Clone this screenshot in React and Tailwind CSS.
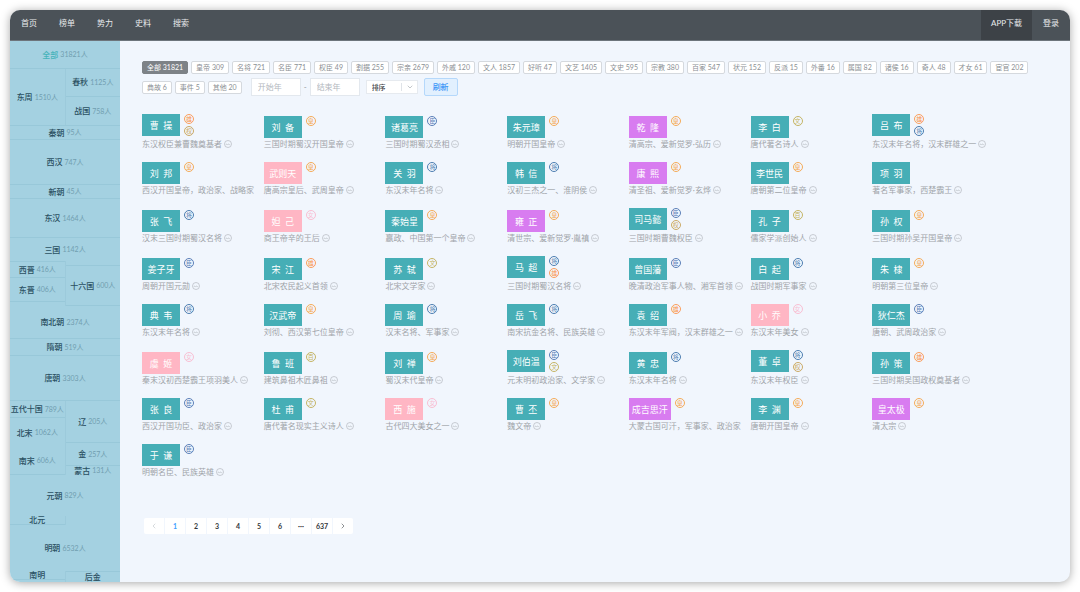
import React, { useState } from 'react';
import { ChevronDown, ChevronLeft, ChevronRight } from 'lucide-react';

const NAV = ['首页', '榜单', '势力', '史料', '搜索'];

// span = share of the timeline height, line = draw a border under the cell
const DYNASTIES = [
  { span: 28, name: '全部', count: 31821, line: true },
  {
    span: 57,
    line: true,
    left: [{ span: 57, name: '东周', count: 1510 }],
    right: [
      { span: 28, name: '春秋', count: 1125, line: true },
      { span: 29, name: '战国', count: 758 },
    ],
  },
  { span: 14, name: '秦朝', count: 95, line: true },
  { span: 45, name: '西汉', count: 747, line: true },
  { span: 14, name: '新朝', count: 45, line: true },
  { span: 39, name: '东汉', count: 1464, line: true },
  { span: 23, name: '三国', count: 1142 },
  {
    span: 45,
    left: [
      { span: 1, line: true },
      { span: 16, name: '西晋', count: 416, line: true },
      { span: 24, name: '东晋', count: 406, line: true },
      { span: 4 },
    ],
    right: [
      { span: 5, line: true },
      { span: 40, name: '十六国', count: 600, line: true },
    ],
  },
  { span: 33, name: '南北朝', count: 2374, line: true },
  { span: 17, name: '隋朝', count: 519, line: true },
  { span: 45, name: '唐朝', count: 3303, line: true },
  {
    span: 74,
    left: [
      { span: 17, name: '五代十国', count: 789, line: true },
      { span: 29, name: '北宋', count: 1062 },
      { span: 28, name: '南宋', count: 606, line: true },
    ],
    right: [
      { span: 42, name: '辽', count: 205, line: true },
      { span: 23, name: '金', count: 257, line: true },
      { span: 9, name: '蒙古', count: 131 },
    ],
  },
  { span: 41, name: '元朝', count: 829 },
  {
    span: 9,
    left: [{ span: 9, name: '北元', line: true }],
    right: [{ span: 9 }],
  },
  { span: 46, name: '明朝', count: 6532 },
  {
    span: 11,
    left: [{ span: 9, name: '南明', line: true }, { span: 2 }],
    right: [{ span: 1, line: true }, { span: 10, name: '后金' }],
  },
];

const TAGS = [
  ['全部', 31821], ['皇帝', 309], ['名将', 721], ['名臣', 771], ['权臣', 49], ['割据', 255],
  ['宗亲', 2679], ['外戚', 120], ['文人', 1857], ['好听', 47], ['文艺', 1405], ['文史', 595],
  ['宗教', 380], ['百家', 547], ['状元', 152], ['反派', 15], ['外番', 16], ['属国', 82],
  ['诸侯', 16], ['奇人', 48], ['才女', 61], ['宦官', 202], ['典故', 6], ['事件', 5], ['其他', 20],
];

// name, description, badges, tone
const PEOPLE = [
  ['曹操', '东汉权臣兼曹魏奠基者', '雄权'],
  ['刘备', '三国时期蜀汉开国皇帝', '皇'],
  ['诸葛亮', '三国时期蜀汉丞相', '臣'],
  ['朱元璋', '明朝开国皇帝', '皇'],
  ['乾隆', '清高宗、爱新觉罗·弘历', '皇', 'purple'],
  ['李白', '唐代著名诗人', '文'],
  ['吕布', '东汉末年名将，汉末群雄之一', '雄将'],
  ['刘邦', '西汉开国皇帝，政治家、战略家', '皇'],
  ['武则天', '唐高宗皇后、武周皇帝', '皇', 'pink'],
  ['关羽', '东汉末年名将', '将'],
  ['韩信', '汉初三杰之一、淮阴侯', '将'],
  ['康熙', '清圣祖、爱新觉罗·玄烨', '皇', 'purple'],
  ['李世民', '唐朝第二位皇帝', '皇'],
  ['项羽', '著名军事家，西楚霸王', ''],
  ['张飞', '汉末三国时期蜀汉名将', '将'],
  ['妲己', '商王帝辛的王后', '女', 'pink'],
  ['秦始皇', '嬴政、中国第一个皇帝', '皇'],
  ['雍正', '清世宗、爱新觉罗·胤禛', '皇', 'purple'],
  ['司马懿', '三国时期曹魏权臣', '臣权'],
  ['孔子', '儒家学派创始人', '百'],
  ['孙权', '三国时期孙吴开国皇帝', '皇'],
  ['姜子牙', '周朝开国元勋', '臣'],
  ['宋江', '北宋农民起义首领', '雄'],
  ['苏轼', '北宋文学家', '文'],
  ['马超', '三国时期蜀汉名将', '将雄'],
  ['曾国藩', '晚清政治军事人物、湘军首领', '臣'],
  ['白起', '战国时期军事家', '将'],
  ['朱棣', '明朝第三位皇帝', '皇'],
  ['典韦', '东汉末年名将', '将'],
  ['汉武帝', '刘彻、西汉第七位皇帝', '皇'],
  ['周瑜', '汉末名将、军事家', '将'],
  ['岳飞', '南宋抗金名将、民族英雄', '将'],
  ['袁绍', '东汉末年军阀，汉末群雄之一', '雄'],
  ['小乔', '东汉末年美女', '女', 'pink'],
  ['狄仁杰', '唐朝、武周政治家', '臣'],
  ['虞姬', '秦末汉初西楚霸王项羽美人', '女', 'pink'],
  ['鲁班', '建筑鼻祖木匠鼻祖', '百'],
  ['刘禅', '蜀汉末代皇帝', '皇'],
  ['刘伯温', '元末明初政治家、文学家', '臣文'],
  ['黄忠', '东汉末年名将', '将'],
  ['董卓', '东汉末年权臣', '将权'],
  ['孙策', '三国时期吴国政权奠基者', '雄'],
  ['张良', '西汉开国功臣、政治家', '臣'],
  ['杜甫', '唐代著名现实主义诗人', '文'],
  ['西施', '古代四大美女之一', '女', 'pink'],
  ['曹丕', '魏文帝', '皇'],
  ['成吉思汗', '大蒙古国可汗，军事家、政治家', '皇', 'purple'],
  ['李渊', '唐朝开国皇帝', '皇'],
  ['皇太极', '清太宗', '皇', 'purple'],
  ['于谦', '明朝名臣、民族英雄', '臣'],
];

const PAGES = ['1', '2', '3', '4', '5', '6', '···', '637'];

const getTone = (tone) => {
  if (tone === 'purple') return 'bg-[#d87cf0]';
  if (tone === 'pink') return 'bg-[#ffb6c4]';
  return 'bg-[#46aeb6]';
};

const getBadgeColor = (badge) => {
  if (badge === '皇') return 'border-[#f5ab58] text-[#f5a44a]';
  if (badge === '雄') return 'border-[#fb9e5c] text-[#fb9750]';
  if (badge === '将') return 'border-[#4c7db0] text-[#4c7db0]';
  if (badge === '臣') return 'border-[#5b7fb8] text-[#5b7fb8]';
  if (badge === '女') return 'border-[#f9bfd3] text-[#f9bfd3]';
  if (badge === '权') return 'border-[#cbaa66] text-[#cbaa66]';
  return 'border-[#c5b565] text-[#c5b565]';
};

const MoreIcon = () => (
  <svg viewBox="0 0 16 16" className="size-2 shrink-0 text-[#b4b9be]" fill="none" stroke="currentColor">
    <circle cx="8" cy="8" r="7" strokeWidth="1.4" />
    <path d="M4 10c.4-2.600 2.400-2.600 2.600-.4M7.500 10.200c.200-2.800 2.300-3 2.500-1 .600.600 1.400.200 2-.800" strokeWidth="1.200" />
  </svg>
);

const DynastyCell = ({ cell, selected, onSelect }) => (
  <div
    className={`flex min-h-0 basis-0 items-center justify-center ${cell.line ? 'border-b border-[#98c8d9]' : ''}`}
    style={{ flexGrow: cell.line ? cell.span - 1 : cell.span }}
  >
    {cell.name && (
      <button
        onClick={() => onSelect(cell.name)}
        className="flex h-0 items-center gap-[2px] whitespace-nowrap text-[8px] font-medium"
      >
        <span className={selected === cell.name ? 'text-[#46b3ba]' : 'text-[#2b5062]'}>{cell.name}</span>
        {cell.count && <span className="text-[7px] font-normal text-[#719eb0]">{cell.count}人</span>}
      </button>
    )}
  </div>
);

const Sidebar = () => {
  const [selected, setSelected] = useState('全部');

  return (
    <aside className="flex w-[110px] shrink-0 flex-col bg-[#a4d1e1]">
      {DYNASTIES.map((row, i) =>
        row.left ? (
          <div
            key={i}
            className={`flex min-h-0 basis-0 ${row.line ? 'border-b border-[#98c8d9]' : ''}`}
            style={{ flexGrow: row.line ? row.span - 1 : row.span }}
          >
            <div className="flex flex-1 flex-col border-r border-[#9ccadb]">
              {row.left.map((cell, j) => (
                <DynastyCell key={j} cell={cell} selected={selected} onSelect={setSelected} />
              ))}
            </div>
            <div className="flex flex-1 flex-col">
              {row.right.map((cell, j) => (
                <DynastyCell key={j} cell={cell} selected={selected} onSelect={setSelected} />
              ))}
            </div>
          </div>
        ) : (
          <DynastyCell key={i} cell={row} selected={selected} onSelect={setSelected} />
        )
      )}
    </aside>
  );
};

const Filters = () => {
  const [tag, setTag] = useState('全部');

  return (
    <div className="flex flex-wrap items-center gap-x-[3px] gap-y-1">
      {TAGS.map(([name, count]) => (
        <button
          key={name}
          onClick={() => setTag(name)}
          className={`h-[13px] whitespace-nowrap rounded-[2px] border px-1 text-[7px] leading-[11px] ${
            tag === name
              ? 'border-[#7d8287] bg-[#7d8287] text-white'
              : 'border-[#d5d9de] bg-white text-[#8b8f94]'
          }`}
        >
          {name} {count}
        </button>
      ))}
      <div className="ml-1.5 flex items-center gap-[3px] text-[8px] text-[#8f959b]">
        <input
          aria-label="开始年"
          placeholder="开始年"
          className="h-[18px] w-[50px] border border-[#e3e8ee] bg-white px-1.5 placeholder:text-[#b3b8be]"
        />
        <span>-</span>
        <input
          aria-label="结束年"
          placeholder="结束年"
          className="h-[18px] w-[50px] border border-[#e3e8ee] bg-white px-1.5 placeholder:text-[#b3b8be]"
        />
      </div>
      <div className="relative ml-[3px] text-[7px]">
        <select
          aria-label="排序"
          className="block h-[14px] w-[52px] appearance-none border border-[#e6eaef] bg-white px-[5px] font-medium leading-3 text-[#3f4347]"
        >
          <option>排序</option>
        </select>
        <span className="pointer-events-none absolute inset-y-[3px] right-0 flex w-[17px] items-center justify-center border-l border-[#dfe3e8] text-[#a5abb1]">
          <ChevronDown size={8} strokeWidth={2} />
        </span>
      </div>
      <button className="ml-[3px] h-[18px] rounded-[2px] border border-[#b5d8fb] bg-[#e2f0fe] px-2 text-[8px] font-medium leading-4 text-[#3d97f7]">
        刷新
      </button>
    </div>
  );
};

const PersonCard = ({ person }) => {
  const [name, desc, badges, tone] = person;
  // two-character names are spaced out to line up with longer ones
  const label = name.length === 2 ? name.split('').join('\u2002') : name;

  return (
    <div className="min-w-0">
      <div className="flex items-start gap-1">
        <a
          href="#"
          className={`flex h-[22px] min-w-[38px] items-center justify-center px-[3px] text-[9px] leading-none text-white ${getTone(tone)}`}
        >
          {label}
        </a>
        <div>
          {badges.split('').map((badge) => (
            <span
              key={badge}
              className={`mb-[2px] flex size-[10px] items-center justify-center rounded-full border text-[6px] leading-none ${getBadgeColor(badge)}`}
            >
              {badge}
            </span>
          ))}
        </div>
      </div>
      <p className="flex h-3 items-center gap-[2px] whitespace-nowrap text-[8px] leading-3 text-[#9fa4a9]">
        {desc}
        {desc.length < 14 && <MoreIcon />}
      </p>
    </div>
  );
};

const Pagination = () => {
  const [page, setPage] = useState('1');

  return (
    <nav aria-label="分页" className="flex gap-px text-[7px] font-bold text-[#33373b]">
      <button aria-label="上一页" className="flex h-4 w-5 items-center justify-center rounded-l-[2px] bg-white text-[#c3c8cd]">
        <ChevronLeft size={8} />
      </button>
      {PAGES.map((p) => (
        <button
          key={p}
          onClick={() => setPage(p)}
          className={`h-4 w-5 bg-white leading-4 ${page === p ? 'text-[#409eff]' : ''}`}
        >
          {p}
        </button>
      ))}
      <button aria-label="下一页" className="flex h-4 w-5 items-center justify-center rounded-r-[2px] bg-white text-[#55595e]">
        <ChevronRight size={8} />
      </button>
    </nav>
  );
};

const App = () => {
  return (
    <div className="flex min-h-screen bg-white p-2.5 font-['Lato','Noto_Sans_CJK_SC',sans-serif]">
      <div className="flex flex-1 flex-col overflow-hidden rounded-[10px] bg-[#f1f6fd] shadow-[0_1px_10px_rgba(0,0,0,0.35)]">
        {/* Top bar */}
        <header className="flex h-[31px] justify-between border-b border-[#6d757c] bg-[#4b5258] text-[8px] text-[#e8eaec]">
          <nav className="flex">
            {NAV.map((item) => (
              <a key={item} href="#" className="flex items-center px-[11px] pb-1">
                {item}
              </a>
            ))}
          </nav>
          <div className="flex">
            <a href="#" className="flex items-center bg-[#3d4247] px-2.5 pb-1">APP下载</a>
            <a href="#" className="flex items-center px-[11px] pb-1">登录</a>
          </div>
        </header>

        <div className="flex flex-1">
          <Sidebar />
          <main className="flex-1 px-[22px] pt-5">
            <Filters />
            <section className="mt-[18px] grid grid-cols-7 items-end gap-y-3 pr-[54px]">
              {PEOPLE.map((person) => (
                <PersonCard key={person[0]} person={person} />
              ))}
            </section>
            <div className="mt-10 px-[2px]">
              <Pagination />
            </div>
          </main>
        </div>
      </div>
    </div>
  );
};

export default App;
